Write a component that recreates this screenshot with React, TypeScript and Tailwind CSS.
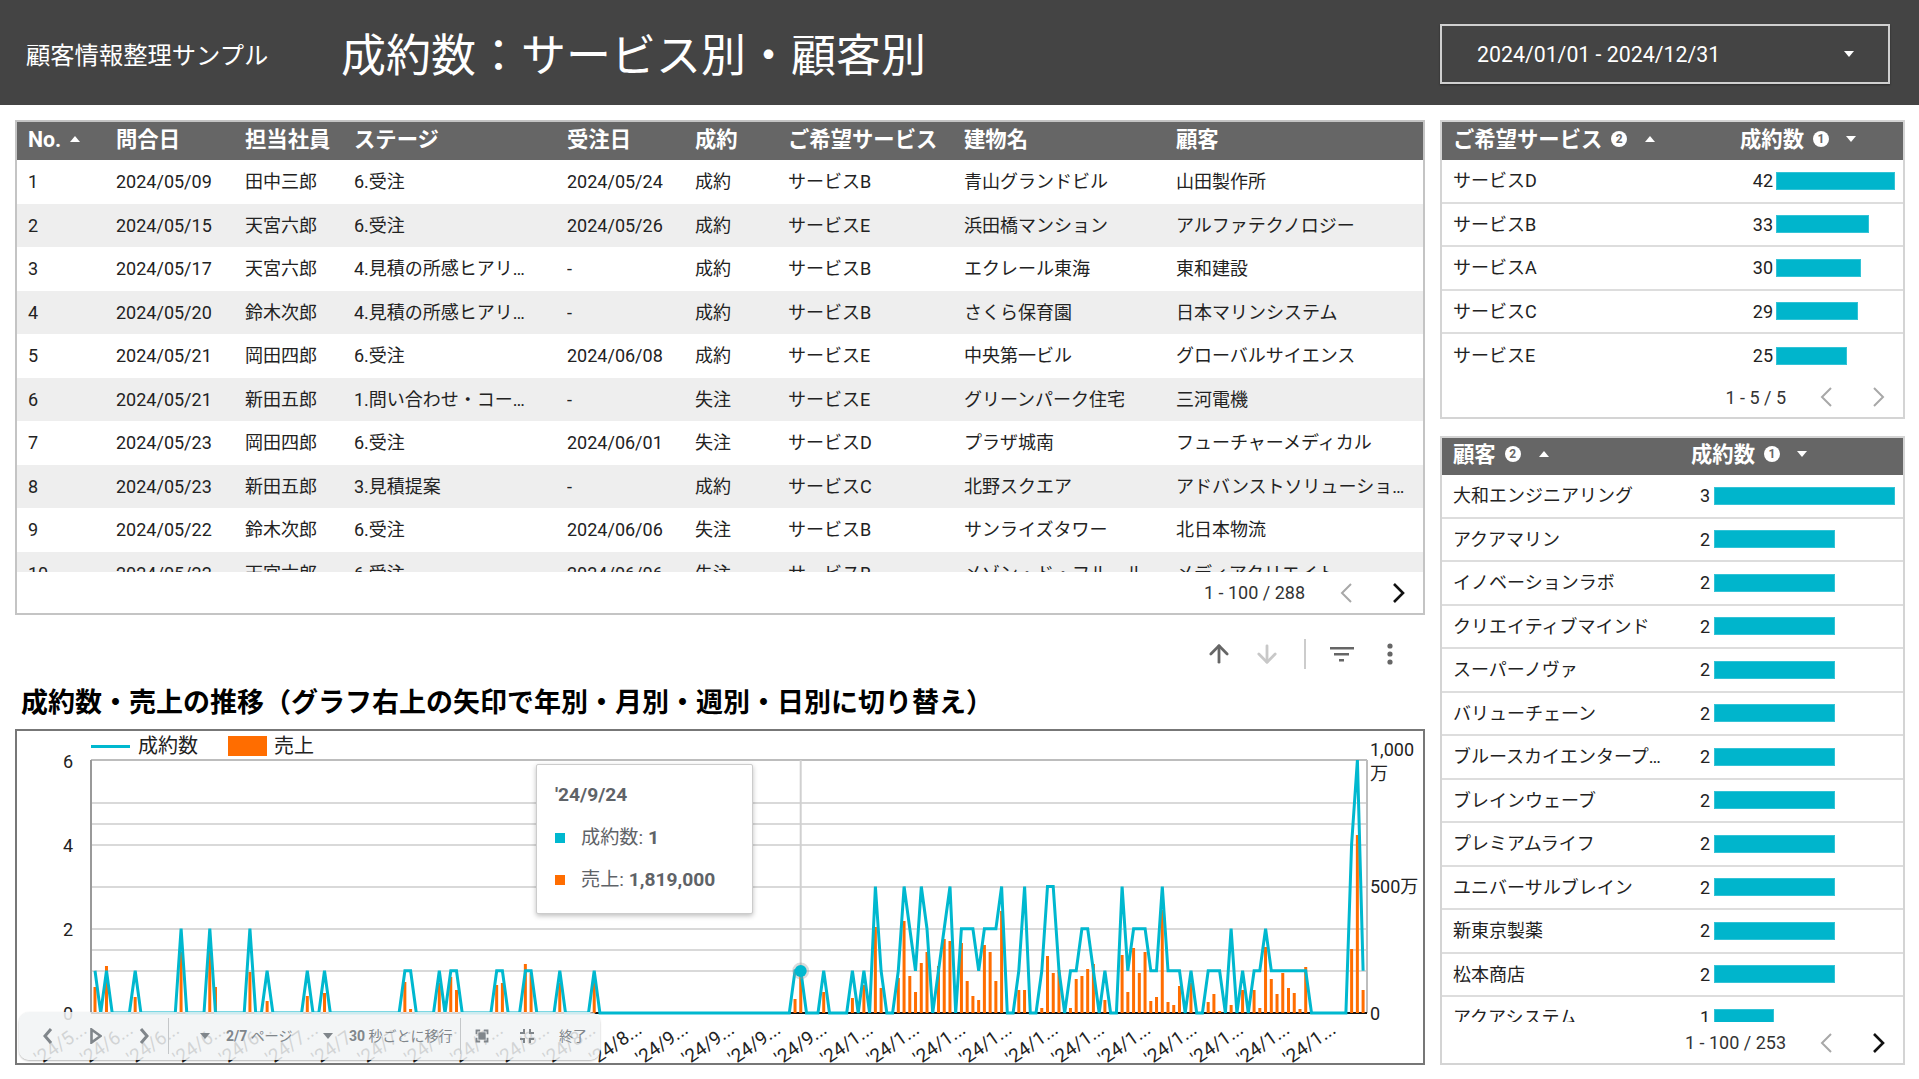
import { ArrowDown, ArrowUp } from "lucide-react";

const tableRows = [
  ["1", "2024/05/09", "田中三郎", "6.受注", "2024/05/24", "成約", "サービスB", "青山グランドビル", "山田製作所"],
  ["2", "2024/05/15", "天宮六郎", "6.受注", "2024/05/26", "成約", "サービスE", "浜田橋マンション", "アルファテクノロジー"],
  ["3", "2024/05/17", "天宮六郎", "4.見積の所感ヒアリ…", "-", "成約", "サービスB", "エクレール東海", "東和建設"],
  ["4", "2024/05/20", "鈴木次郎", "4.見積の所感ヒアリ…", "-", "成約", "サービスB", "さくら保育園", "日本マリンシステム"],
  ["5", "2024/05/21", "岡田四郎", "6.受注", "2024/06/08", "成約", "サービスE", "中央第一ビル", "グローバルサイエンス"],
  ["6", "2024/05/21", "新田五郎", "1.問い合わせ・コー…", "-", "失注", "サービスE", "グリーンパーク住宅", "三河電機"],
  ["7", "2024/05/23", "岡田四郎", "6.受注", "2024/06/01", "失注", "サービスD", "プラザ城南", "フューチャーメディカル"],
  ["8", "2024/05/23", "新田五郎", "3.見積提案", "-", "成約", "サービスC", "北野スクエア", "アドバンストソリューショ…"],
  ["9", "2024/05/22", "鈴木次郎", "6.受注", "2024/06/06", "失注", "サービスB", "サンライズタワー", "北日本物流"],
  ["10", "2024/05/22", "天宮六郎", "6.受注", "2024/06/06", "失注", "サービスB", "メゾン・ド・フルール", "メディアクリエイト"],
];

const serviceRows: [string, number][] = [
  ["サービスD", 42],
  ["サービスB", 33],
  ["サービスA", 30],
  ["サービスC", 29],
  ["サービスE", 25],
];

const customerRows: [string, number][] = [
  ["大和エンジニアリング", 3],
  ["アクアマリン", 2],
  ["イノベーションラボ", 2],
  ["クリエイティブマインド", 2],
  ["スーパーノヴァ", 2],
  ["バリューチェーン", 2],
  ["ブルースカイエンタープライズ", 2],
  ["ブレインウェーブ", 2],
  ["プレミアムライフ", 2],
  ["ユニバーサルブレイン", 2],
  ["新東京製薬", 2],
  ["松本商店", 2],
  ["アクアシステム", 1],
];

// non-zero days only, index -> 成約数
const counts: Record<number, number> = {
  0: 1, 2: 1, 7: 1, 15: 2, 20: 2, 27: 2, 30: 1, 37: 1, 40: 1, 54: 1, 55: 1, 60: 1, 62: 1, 63: 1, 70: 1, 71: 1,
  75: 1, 76: 1, 81: 1, 87: 1, 122: 1, 123: 1, 127: 1, 132: 1, 134: 1, 136: 3, 137: 1, 140: 1, 141: 3, 142: 2,
  143: 1, 144: 3, 145: 2, 147: 1, 148: 2, 149: 3, 151: 2, 152: 2, 153: 2, 154: 1, 155: 2, 156: 2, 157: 2, 158: 3,
  161: 1, 162: 3, 165: 1, 166: 3, 167: 3, 168: 1, 170: 1, 171: 1, 172: 2, 173: 2, 174: 1, 176: 1, 179: 3, 180: 1,
  181: 2, 182: 2, 183: 2, 184: 1, 185: 1, 186: 3, 187: 1, 188: 1, 189: 1, 191: 1, 194: 1, 195: 1, 196: 1, 198: 2,
  200: 1, 202: 1, 203: 1, 204: 2, 205: 1, 206: 1, 207: 1, 208: 1, 209: 1, 210: 1, 211: 1, 219: 4, 220: 6, 221: 1,
};

// bar heights in px
const sales: Record<number, number> = {
  0: 26, 2: 47, 7: 16, 15: 61, 20: 65, 21: 26, 27: 41, 30: 12, 37: 17, 40: 20, 54: 31, 55: 4, 60: 30, 62: 36, 63: 23,
  70: 28, 71: 30, 75: 49, 76: 40, 81: 30, 87: 30, 122: 14, 123: 46, 127: 21, 132: 15, 134: 28, 136: 86, 137: 25,
  140: 35, 141: 92, 142: 37, 143: 21, 144: 50, 145: 61, 147: 47, 148: 74, 149: 72, 151: 70, 152: 32, 153: 17, 154: 13,
  155: 68, 156: 61, 157: 32, 158: 102, 161: 23, 162: 23, 165: 5, 166: 57, 167: 40, 168: 43, 170: 5, 171: 34, 172: 37,
  173: 44, 174: 49, 176: 13, 179: 58, 180: 21, 181: 65, 182: 40, 183: 61, 184: 12, 185: 16, 186: 103, 187: 11, 188: 8,
  189: 27, 191: 30, 194: 11, 195: 19, 196: 2, 198: 8, 200: 23, 202: 23, 203: 5, 204: 66, 205: 34, 206: 19, 207: 40,
  208: 25, 209: 20, 210: 4, 211: 46, 219: 64, 220: 178, 221: 23,
};

const months = ["5", "6", "6", "6", "6", "7", "7", "7", "7", "7", "8", "8", "8", "9", "9", "9", "9", "1", "1", "1", "1", "1", "1", "1", "1", "1", "1", "1"];
const gridLines = [803, 824, 845, 887, 929, 950, 971];

const xAt = (i: number) => 95 + 5.738 * i;
const linePoints = Array.from({ length: 222 }, (_, i) => `${xAt(i).toFixed(1)},${(1013 - (counts[i] ?? 0) * 42.17).toFixed(1)}`).join(" ");

const Caret = ({ up = false, color = "#ffffff" }: { up?: boolean; color?: string }) => (
  <svg width="10" height="6" viewBox="0 0 10 6" className="shrink-0">
    <path d={up ? "M5 0 L10 6 L0 6 Z" : "M0 0 L10 0 L5 6 Z"} fill={color} />
  </svg>
);

const Badge = ({ n }: { n: number }) => (
  <span className="flex h-[16px] w-[16px] shrink-0 items-center justify-center rounded-full bg-white text-[12px] font-bold leading-none text-[#666666]">{n}</span>
);

const Chevron = ({ left = false, active = false }: { left?: boolean; active?: boolean }) => (
  <svg width="28" height="22" viewBox="0 0 28 22" className="shrink-0">
    <path d={left ? "M19 2 L10 11 L19 20" : "M9 2 L18 11 L9 20"} fill="none" stroke={active ? "#111111" : "#a8a8a8"} strokeWidth={active ? 2.6 : 2} />
  </svg>
);

const RankRow = ({ label, value, scale, labelWidth, numWidth, gap }: { label: string; value: number; scale: number; labelWidth: string; numWidth: string; gap: string }) => (
  <div className="flex h-[43.5px] shrink-0 items-center border-b-2 border-[#dddddd] pl-[11px] text-[#222222]">
    <span className={`truncate ${labelWidth}`}>{label}</span>
    <span className={`text-right ${numWidth}`}>{value}</span>
    <span className={`h-[18px] border border-[#33c3d6] bg-[#00b5cc] ${gap}`} style={{ width: value * scale }} />
  </div>
);

const TrendChart = () => (
  <svg viewBox="17 758 1405 303" className="block h-[303px] w-[1405px] overflow-visible">
    <line x1="91" y1="760" x2="1367" y2="760" stroke="#bdbdbd" strokeWidth="2" />
    {gridLines.map((y) => (
      <line key={y} x1="91" y1={y} x2="1367" y2={y} stroke="#d9d9d9" strokeWidth="2" />
    ))}
    <line x1="91" y1="760" x2="91" y2="1013" stroke="#999999" strokeWidth="2" />
    <line x1="1367" y1="760" x2="1367" y2="1013" stroke="#bdbdbd" strokeWidth="2" />
    <line x1="800.7" y1="760" x2="800.7" y2="1013" stroke="#d0d0d0" strokeWidth="2" />
    <line x1="91" y1="1013" x2="1367" y2="1013" stroke="#111111" strokeWidth="2" />
    {Object.entries(sales).map(([i, h]) => (
      <rect key={i} x={xAt(Number(i)) - 1.5} y={1013 - h} width="3" height={h} fill="#ff6d00" />
    ))}
    <polyline points={linePoints} fill="none" stroke="#00b8cf" strokeWidth="3" strokeLinejoin="miter" />
    <circle cx="800.7" cy="971" r="8.5" fill="#999999" opacity="0.35" />
    <circle cx="800.7" cy="971" r="6" fill="#00b8cf" />
    <g fontSize="18" fill="#222222" fontFamily="Roboto, 'Noto Sans CJK JP', sans-serif">
      <text x="68" y="768" textAnchor="middle">6</text>
      <text x="68" y="852" textAnchor="middle">4</text>
      <text x="68" y="936" textAnchor="middle">2</text>
      <text x="68" y="1020" textAnchor="middle">0</text>
      <text x="1370" y="756">1,000</text>
      <text x="1370" y="780">万</text>
      <text x="1370" y="893">500万</text>
      <text x="1370" y="1020">0</text>
      {months.map((m, n) => {
        const x = 88 + 46.26 * n;
        return (
          <text key={n} x={x} y="1032" fontSize="19" textAnchor="end" transform={`rotate(-35 ${x} 1032)`}>
            {`'24/${m}...`}
          </text>
        );
      })}
    </g>
  </svg>
);

const ReportControls = () => (
  <div className="absolute left-[2px] top-[281px] flex h-[48px] w-[581px] items-center rounded-[10px] bg-[#f1f3f4]/85 pl-[5px] text-[14px] text-[#80868b] shadow-[0_1px_2px_rgba(0,0,0,0.3)]">
    <div className="flex w-[48px] justify-center">
      <svg width="12" height="18" viewBox="0 0 12 18"><path d="M9 2 L3 9 L9 16" fill="none" stroke="#80868b" strokeWidth="3" /></svg>
    </div>
    <div className="flex w-[48px] justify-center">
      <svg width="12" height="16" viewBox="0 0 12 16"><path d="M1.5 1.5 L10.5 8 L1.5 14.5 Z" fill="none" stroke="#80868b" strokeWidth="2.6" /></svg>
    </div>
    <div className="flex w-[48px] justify-center">
      <svg width="12" height="18" viewBox="0 0 12 18"><path d="M3 2 L9 9 L3 16" fill="none" stroke="#80868b" strokeWidth="3" /></svg>
    </div>
    <span className="h-[36px] w-px bg-[#c4c7c9]" />
    <span className="ml-[31px]"><Caret color="#80868b" /></span>
    <span className="ml-[16px] w-[65px] whitespace-nowrap"><b>2/7</b> ページ</span>
    <span className="ml-[32px]"><Caret color="#80868b" /></span>
    <span className="ml-[16px] w-[105px] whitespace-nowrap"><b>30</b> 秒ごとに移行</span>
    <span className="ml-[6px] h-[36px] w-px bg-[#c4c7c9]" />
    <svg width="22" height="22" viewBox="0 0 24 24" className="ml-[10px]" fill="#80868b">
      <path d="M7 14H5v5h5v-2H7v-3zm-2-4h2V7h3V5H5v5zm12 7h-3v2h5v-5h-2v3zM14 5v2h3v3h2V5h-5z" />
      <rect x="8" y="8" width="8" height="8" />
    </svg>
    <svg width="24" height="24" viewBox="0 0 24 24" className="ml-[22px]" fill="#80868b">
      <path d="M5 16h3v3h2v-5H5v2zm3-8H5v2h5V5H8v3zm6 11h2v-3h3v-2h-5v5zm2-11V5h-2v5h5V8h-3z" />
    </svg>
    <span className="ml-[20px] whitespace-nowrap">終了</span>
  </div>
);

export default function App() {
  return (
    <div className="h-[1079px] w-[1919px] overflow-hidden bg-white font-['Roboto','Noto_Sans_CJK_JP',sans-serif] text-[18px]">
      <header className="flex h-[105px] items-center bg-[#444444] pl-[26px] text-white">
        <div className="w-[315px] shrink-0 pt-[7px] text-[24.3px]">顧客情報整理サンプル</div>
        <h1 className="flex-1 pt-[8px] text-[45px] leading-none">成約数：サービス別・顧客別</h1>
        <div className="mr-[29px] mt-[3px] flex h-[60px] w-[450px] items-center justify-between border-2 border-[#d0d0d0] pl-[35px] pr-[34px] text-[21.3px] shadow-[0_1px_2px_rgba(0,0,0,0.4)]">
          <span className="pt-[2px]">2024/01/01 - 2024/12/31</span>
          <Caret />
        </div>
      </header>

      <main className="flex gap-[15px] pl-[15px] pt-[15px]">
        <section className="w-[1410px] shrink-0">
          <div className="flex h-[495px] flex-col border-2 border-[#c4c4c4]">
            <div className="grid h-[38px] shrink-0 grid-cols-[88px_129px_109px_213px_128px_93px_176px_212px_1fr] items-center bg-[#666666] pb-[3px] pl-[11px] text-[21.33px] font-bold text-white">
              <span className="flex items-center gap-[9px]">No.<Caret up /></span>
              <span>問合日</span>
              <span>担当社員</span>
              <span>ステージ</span>
              <span>受注日</span>
              <span>成約</span>
              <span>ご希望サービス</span>
              <span>建物名</span>
              <span>顧客</span>
            </div>
            <div className="h-[412px] shrink-0 overflow-hidden">
              {tableRows.map((row, i) => (
                <div
                  key={row[0]}
                  className={`grid h-[43.5px] grid-cols-[88px_129px_109px_213px_128px_93px_176px_212px_1fr] items-center pl-[11px] text-[#222222] ${i % 2 === 1 ? "border-y border-[#eeeeee] bg-[#eeeeee]" : ""}`}
                >
                  {row.map((cell, c) => (
                    <span key={c} className="truncate whitespace-nowrap">{cell}</span>
                  ))}
                </div>
              ))}
            </div>
            <div className="flex flex-1 items-center justify-end pr-[10px] text-[#333333]">
              <span>1 - 100 / 288</span>
              <span className="ml-[27px]"><Chevron left /></span>
              <span className="ml-[25px]"><Chevron active /></span>
            </div>
          </div>

          <div className="mt-[19px] flex h-[40px] items-center text-[#666666]">
            <ArrowUp size={28} strokeWidth={2.4} className="ml-[1190px] shrink-0" />
            <ArrowDown size={28} strokeWidth={2.4} className="ml-[20px] shrink-0 text-[#c8c8c8]" />
            <span className="ml-[23px] h-[30px] w-[2px] bg-[#cccccc]" />
            <svg width="24" height="18" viewBox="0 0 24 18" className="ml-[24px] shrink-0" fill="#666666">
              <rect x="0" y="2" width="24" height="2.5" />
              <rect x="4" y="8" width="15" height="2.5" />
              <rect x="9" y="14" width="5" height="2.5" />
            </svg>
            <svg width="8" height="24" viewBox="0 0 8 24" className="ml-[32px] shrink-0" fill="#666666">
              <circle cx="4" cy="4" r="2.6" />
              <circle cx="4" cy="12" r="2.6" />
              <circle cx="4" cy="20" r="2.6" />
            </svg>
          </div>

          <h2 className="flex h-[55px] items-center pl-[6px] pt-[4px] text-[27px] font-bold text-black">成約数・売上の推移（グラフ右上の矢印で年別・月別・週別・日別に切り替え）</h2>

          <div className="relative h-[336px] border-2 border-[#777777]">
            <div className="flex h-[27px] items-center pl-[74px] pt-[3px] text-[20px] text-[#222222]">
              <span className="h-[3px] w-[39px] bg-[#00b8cf]" />
              <span className="ml-[8px]">成約数</span>
              <span className="ml-[30px] h-[20px] w-[39px] bg-[#ff6d00]" />
              <span className="ml-[7px]">売上</span>
            </div>
            <TrendChart />
            <div className="absolute left-[519px] top-[33px] flex h-[150px] w-[217px] flex-col rounded-[2px] border border-[#cccccc] bg-white pl-[18px] text-[19.2px] text-[#5f6368] shadow-[0_2px_5px_rgba(0,0,0,0.25)]">
              <b className="mt-[18px] leading-[24px]">'24/9/24</b>
              <div className="mt-[19px] flex items-center leading-[24px]">
                <span className="mr-[16px] h-[10px] w-[10px] bg-[#00b8cf]" />
                <span>成約数: <b>1</b></span>
              </div>
              <div className="mt-[18px] flex items-center leading-[24px]">
                <span className="mr-[16px] h-[10px] w-[10px] bg-[#ff6d00]" />
                <span>売上: <b>1,819,000</b></span>
              </div>
            </div>
            <ReportControls />
          </div>
        </section>

        <aside className="w-[465px] shrink-0">
          <div className="flex h-[299px] flex-col border-2 border-[#d4d4d4]">
            <div className="flex h-[38px] shrink-0 items-center bg-[#666666] pb-[3px] pl-[11px] text-[21.33px] font-bold text-white">
              <div className="flex w-[287px] items-center">
                <span>ご希望サービス</span>
                <span className="ml-[9px]"><Badge n={2} /></span>
                <span className="ml-[18px]"><Caret up /></span>
              </div>
              <div className="flex items-center">
                <span>成約数</span>
                <span className="ml-[9px]"><Badge n={1} /></span>
                <span className="ml-[17px]"><Caret /></span>
              </div>
            </div>
            {serviceRows.map(([label, value], i) => (
              <div key={label} className={i === 4 ? "[&>div]:border-b-0" : ""}>
                <RankRow label={label} value={value} scale={2.83} labelWidth="w-[270px]" numWidth="w-[50px]" gap="ml-[3px]" />
              </div>
            ))}
            <div className="flex flex-1 items-center justify-end pr-[10px] text-[#333333]">
              <span>1 - 5 / 5</span>
              <span className="ml-[26px]"><Chevron left /></span>
              <span className="ml-[25px]"><Chevron /></span>
            </div>
          </div>

          <div className="mt-[17px] flex h-[629px] flex-col border-2 border-[#d4d4d4]">
            <div className="flex h-[37px] shrink-0 items-center bg-[#666666] pb-[4px] pl-[11px] text-[21.33px] font-bold text-white">
              <div className="flex w-[238px] items-center">
                <span>顧客</span>
                <span className="ml-[9px]"><Badge n={2} /></span>
                <span className="ml-[18px]"><Caret up /></span>
              </div>
              <div className="flex items-center">
                <span>成約数</span>
                <span className="ml-[9px]"><Badge n={1} /></span>
                <span className="ml-[17px]"><Caret /></span>
              </div>
            </div>
            <div className="flex h-[547px] shrink-0 flex-col overflow-hidden">
              {customerRows.map(([label, value]) => (
                <RankRow key={label} label={label} value={value} scale={60.33} labelWidth="w-[212px]" numWidth="w-[45px]" gap="ml-[4px]" />
              ))}
            </div>
            <div className="flex flex-1 items-center justify-end pr-[10px] text-[#333333]">
              <span>1 - 100 / 253</span>
              <span className="ml-[26px]"><Chevron left /></span>
              <span className="ml-[25px]"><Chevron active /></span>
            </div>
          </div>
        </aside>
      </main>
    </div>
  );
}
